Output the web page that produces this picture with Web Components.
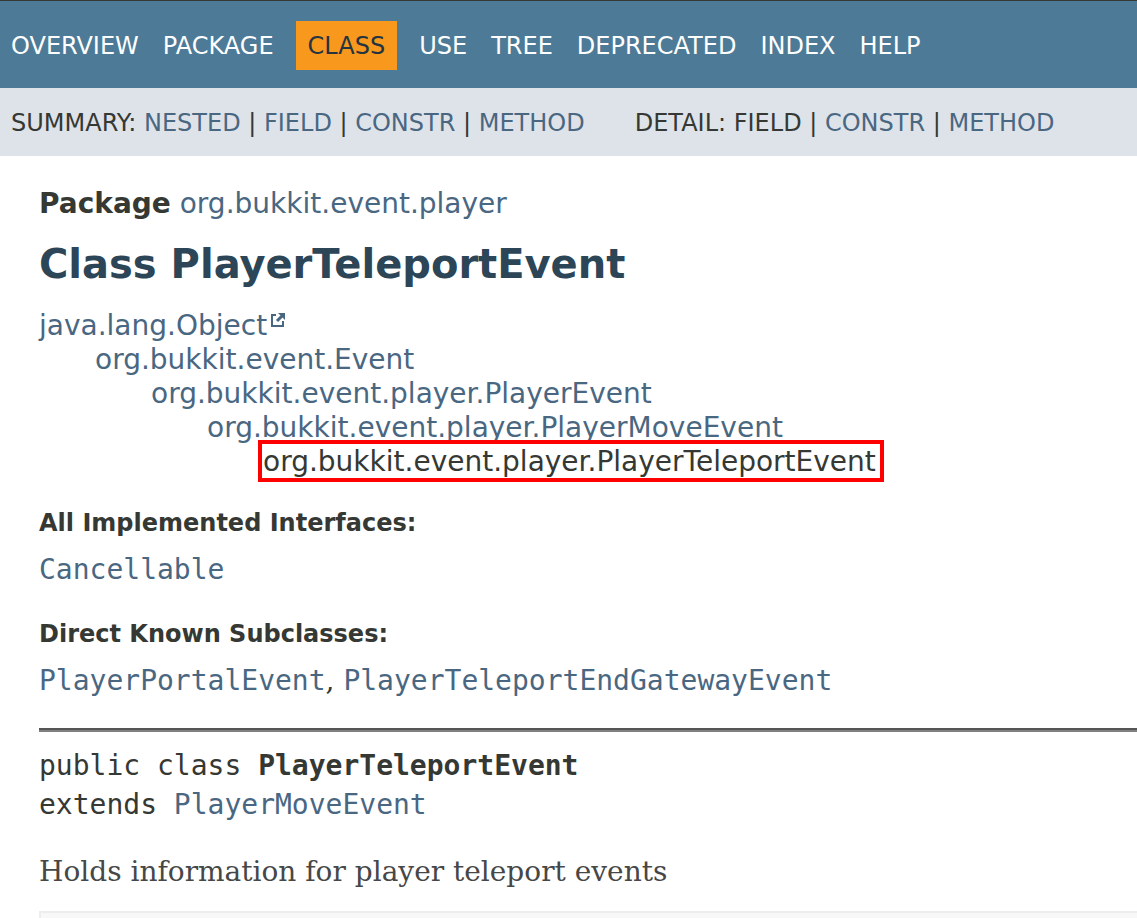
<!DOCTYPE html>
<html lang="en">
<head>
<meta charset="utf-8">
<title>PlayerTeleportEvent</title>
<style>
  body {
    margin: 0;
    background: #fff;
    color: #353833;
    font-family: "DejaVu Sans", sans-serif;
    --link: #4a6782;
    --gutter: 39px;
  }
</style>
</head>
<body>
<doc-page>
  <doc-topnav slot="header">
    <a href="#overview">OVERVIEW</a>
    <a href="#package">PACKAGE</a>
    <span aria-current="page">CLASS</span>
    <a href="#use">USE</a>
    <a href="#tree">TREE</a>
    <a href="#deprecated">DEPRECATED</a>
    <a href="#index">INDEX</a>
    <a href="#help">HELP</a>
  </doc-topnav>
  <doc-subnav slot="header"></doc-subnav>
  <doc-title></doc-title>
  <doc-inheritance></doc-inheritance>
  <doc-notes label="All Implemented Interfaces:"><doc-type name="Cancellable"></doc-type></doc-notes>
  <doc-notes label="Direct Known Subclasses:"><doc-type name="PlayerPortalEvent"></doc-type>, <doc-type name="PlayerTeleportEndGatewayEvent"></doc-type></doc-notes>
  <doc-signature>Holds information for player teleport events</doc-signature>
  <doc-summary></doc-summary>
</doc-page>

<script>
const define = (name, html) => {
  const template = document.createElement("template");
  template.innerHTML = html;
  customElements.define(name, class extends HTMLElement {
    constructor() {
      super();
      this.attachShadow({ mode: "open" }).append(template.content.cloneNode(true));
    }
    connectedCallback() {
      const label = this.shadowRoot.querySelector("[data-label]");
      if (label) label.textContent = this.getAttribute("label");
      const link = this.shadowRoot.querySelector("[data-name]");
      if (link) {
        link.textContent = this.getAttribute("name");
        link.href = "#" + this.getAttribute("name");
      }
    }
  });
};

define("doc-page", `
  <style>
    :host { display: flex; flex-direction: column; min-height: 100vh; }
    main { flex: 1; display: flex; flex-direction: column; padding: 31px 0 0 var(--gutter); }
  </style>
  <header><slot name="header"></slot></header>
  <main><slot></slot></main>`);

define("doc-topnav", `
  <style>
    :host { display: block; background: #4d7a97; border-top: 1px solid #353833; color: #fff; font-size: 24px; line-height: 29px; }
    nav { display: flex; flex-wrap: wrap; padding: 20px 0 18px; }
    ::slotted(*) { padding: 11px 12px 9px; color: #fff; text-decoration: none; }
    ::slotted(:first-child) { padding-left: 11px; }
    ::slotted([aria-current]) { margin: 0 10px; background: #f8981d; color: #253441; }
  </style>
  <nav aria-label="Main"><slot></slot></nav>`);

define("doc-subnav", `
  <style>
    :host { display: block; background: #dee3e9; font-size: 24px; line-height: 28px; }
    nav { display: flex; flex-wrap: wrap; gap: 0 50px; padding: 21px 11px 19px; }
    a { color: var(--link); text-decoration: none; }
  </style>
  <nav aria-label="Sections">
    <div>SUMMARY: <a href="#nested">NESTED</a> | <a href="#field">FIELD</a> | <a href="#constr">CONSTR</a> | <a href="#method">METHOD</a></div>
    <div>DETAIL: FIELD | <a href="#constr-detail">CONSTR</a> | <a href="#method-detail">METHOD</a></div>
  </nav>`);

define("doc-title", `
  <style>
    :host { display: block; font-size: 28px; line-height: 34px; }
    a { color: var(--link); text-decoration: none; }
    h1 { margin: 19px 0 21px; color: #2c4557; font-size: 40px; line-height: 48px; }
  </style>
  <div><b>Package</b> <a href="#package">org.bukkit.event.player</a></div>
  <h1>Class PlayerTeleportEvent</h1>`);

define("doc-inheritance", `
  <style>
    :host { display: block; font-size: 28px; line-height: 34px; margin-bottom: 30px; }
    ul { list-style: none; margin: 0; padding: 0; }
    ul ul { padding-left: 56px; }
    a { color: var(--link); text-decoration: none; }
    svg { width: 14px; height: 14px; margin-left: 4px; vertical-align: 8px; }
    .current { display: inline-block; vertical-align: top; position: relative; }
    /* highlight frame drawn over the tree */
    .current::after { content: ""; position: absolute; inset: -5px -8px -3px -5px; border: 4px solid #f00; }
  </style>
  <ul>
    <li><a href="#Object">java.lang.Object<svg viewBox="0 0 14 14" aria-hidden="true"><path d="M5 2H1V13H12V8" fill="none" stroke="#4a6782" stroke-width="2"/><path d="M7 0H14V7Z" fill="#4a6782"/><path d="M12 2L6 8" stroke="#4a6782" stroke-width="3"/></svg></a>
      <ul><li><a href="#Event">org.bukkit.event.Event</a>
        <ul><li><a href="#PlayerEvent">org.bukkit.event.player.PlayerEvent</a>
          <ul><li><a href="#PlayerMoveEvent">org.bukkit.event.player.PlayerMoveEvent</a>
            <ul><li><span class="current">org.bukkit.event.player.PlayerTeleportEvent</span></li></ul>
          </li></ul>
        </li></ul>
      </li></ul>
    </li>
  </ul>`);

define("doc-notes", `
  <style>
    :host { display: block; font-size: 28px; line-height: 34px; }
    :host(:not(:last-of-type)) { margin-bottom: 33px; }
    :host(:last-of-type) { margin-bottom: 30px; }
    dl { margin: 0; }
    dt { font-size: 24px; line-height: 28px; font-weight: bold; margin-bottom: 16px; }
    dd { margin: 0; font-family: "DejaVu Serif", serif; }
  </style>
  <dl><dt data-label></dt><dd><slot></slot></dd></dl>`);

define("doc-type", `
  <style>
    :host { display: inline; font-family: "DejaVu Sans Mono", monospace; }
    a { color: var(--link); text-decoration: none; }
  </style><a data-name></a>`);

define("doc-signature", `
  <style>
    :host { display: block; margin-bottom: 20px; }
    hr { margin: 0 0 14px; border: solid; border-width: 2px 0; border-color: #555 transparent #808080; }
    .code { font: 28px/39px "DejaVu Sans Mono", monospace; }
    p { margin: 29px 0 0; color: #474747; font: 28px/38px "DejaVu Serif", serif; }
  </style>
  <hr>
  <div class="code">public class <b>PlayerTeleportEvent</b><br>extends <doc-type name="PlayerMoveEvent"></doc-type></div>
  <p><slot></slot></p>`);

define("doc-summary", `
  <style>
    :host { display: block; flex: 1; min-height: 4px; border: solid #ededed; border-width: 2px 0 0 2px; background: #f8f8f8; }
  </style>`);
</script>
</body>
</html>
